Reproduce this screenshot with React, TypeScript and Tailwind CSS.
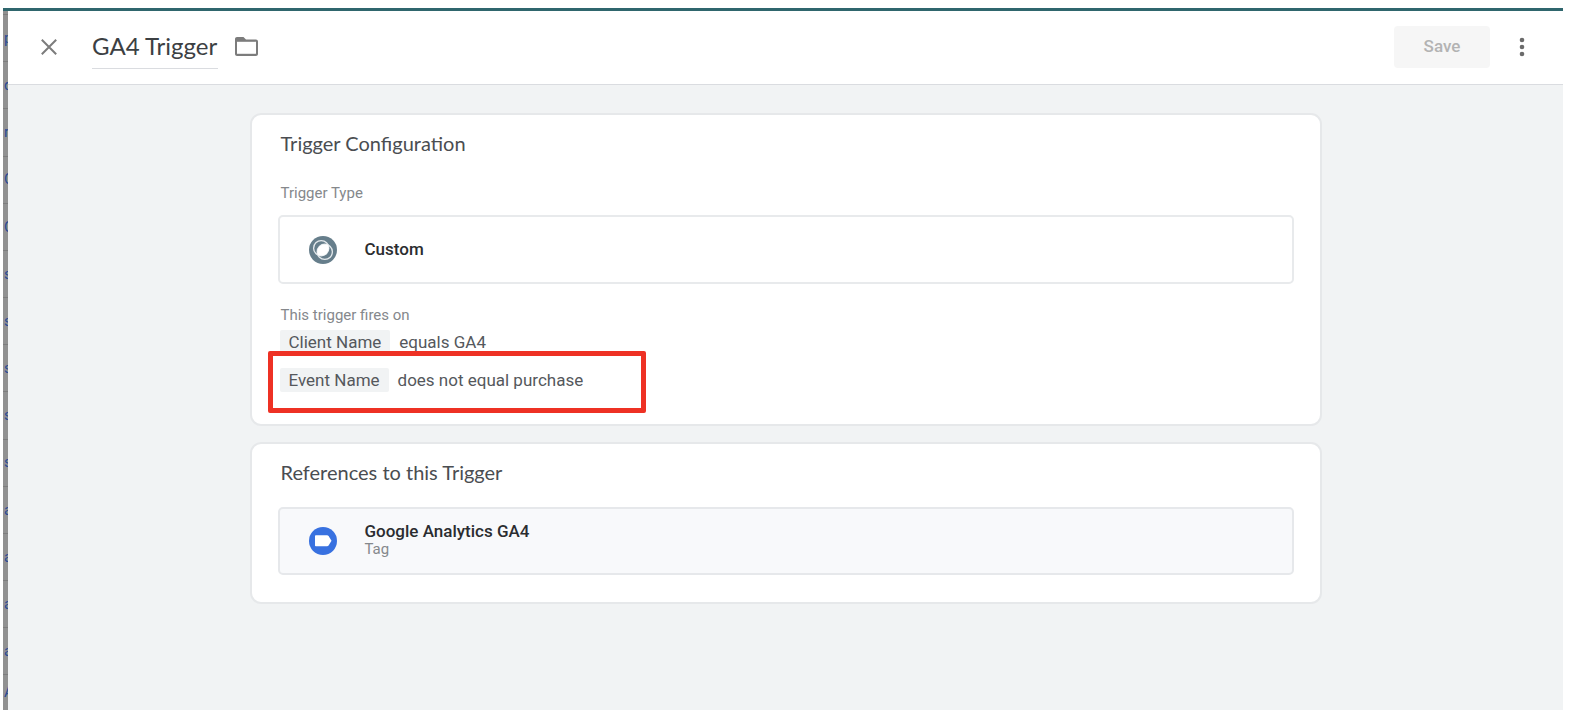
import React from "react";

// first letters of the list rows that stay visible behind the sheet
const BACKDROP_ROWS = ["p", "d", "r", "C", "C", "s", "s", "s", "s", "s", "a", "a", "a", "a", "A"];

const CONDITIONS = [
  { variable: "Client Name", test: "equals GA4", marked: false },
  { variable: "Event Name", test: "does not equal purchase", marked: true },
];

function CloseIcon() {
  return (
    <svg viewBox="0 0 16 16" className="size-4" fill="none" stroke="#7c7c7c" strokeWidth="2">
      <path d="M0.8 0.8 15.2 15.2M15.2 0.8 0.8 15.2" />
    </svg>
  );
}

function FolderIcon() {
  return (
    <svg viewBox="0 0 23 19" className="h-[19px] w-[23px]">
      <path d="M2 0h6.5l2.5 2.6H21c1.1 0 2 .9 2 2V17c0 1.1-.9 2-2 2H2c-1.1 0-2-.9-2-2V2C0 .9.9 0 2 0z" fill="#7c7c7c" />
      <path d="M2 4.8h19v12H2z" fill="#fff" />
    </svg>
  );
}

function MoreIcon() {
  return (
    <svg viewBox="0 0 6 20" className="h-5 w-[6px]" fill="#6b6b6b">
      <circle cx="3" cy="3" r="2.3" />
      <circle cx="3" cy="10" r="2.3" />
      <circle cx="3" cy="17" r="2.3" />
    </svg>
  );
}

function CustomIcon() {
  return (
    <svg viewBox="0 0 28 28" className="size-7 shrink-0">
      <clipPath id="custom-lens">
        <circle cx="12.2" cy="12.2" r="7.6" />
      </clipPath>
      <circle cx="14" cy="14" r="14" fill="#667e8b" />
      <circle cx="12.2" cy="12.2" r="7.6" fill="none" stroke="#e4e9ec" strokeWidth="1.3" />
      <circle cx="15.8" cy="15.8" r="7.6" fill="none" stroke="#e4e9ec" strokeWidth="1.3" />
      <circle cx="15.8" cy="15.8" r="7.6" fill="#fff" clipPath="url(#custom-lens)" />
    </svg>
  );
}

function TagIcon() {
  return (
    <svg viewBox="0 0 28 28" className="size-7 shrink-0">
      <circle cx="14" cy="14" r="14" fill="#3871e0" />
      <path d="M6.8 8.3H18c.7 0 1.2.3 1.6.8l2.9 4.7-2.9 4.7c-.4.5-.9.8-1.600.8H6.8c-.5 0-.8-.3-.8-.8V9.100c0-.5.3-.8.8-.8z" fill="#fff" />
    </svg>
  );
}

function Card({ title, children }: { title: string; children: React.ReactNode }) {
  return (
    <section className="rounded-[11px] border-2 border-[#e6e8ea] bg-white px-[26px] pt-4 pb-[27px]">
      <h2 className="px-[3px] font-['Lato'] text-xl leading-6 text-[#4a4d51]">{title}</h2>
      {children}
    </section>
  );
}

export default function App() {
  const [name, setName] = React.useState("GA4 Trigger");

  return (
    <div className="flex min-h-screen flex-col bg-white pt-2 pr-[9px] pb-[2px] pl-[3px] font-['Roboto',sans-serif]">
      <div className="h-[3px] bg-[#2f666d]" />
      <div className="flex flex-1">
        <aside aria-hidden="true" className="flex w-[5px] flex-col overflow-hidden bg-[#919191] pt-[3px]">
          {BACKDROP_ROWS.map((letter, i) => (
            <div
              key={i}
              className="flex h-0 flex-4 items-center border-t border-[#7d7d7d] pl-px text-[15px] text-[#2b4a94] last:flex-3"
            >
              {letter}
            </div>
          ))}
        </aside>

        <div className="flex flex-1 flex-col bg-[#f1f3f4]">
          <header className="flex h-[74px] items-center border-b border-[#dadce0] bg-white pr-[38px] pb-[2px] pl-[33px]">
            <button aria-label="Close">
              <CloseIcon />
            </button>
            <input
              aria-label="Trigger name"
              value={name}
              onChange={(e) => setName(e.target.value)}
              className="mr-[17px] ml-[35px] h-11 w-[126px] border-b border-[#dadce0] pb-[2px] font-['Lato'] text-2xl text-[#3c4043] outline-none"
            />
            <button aria-label="Choose folder">
              <FolderIcon />
            </button>
            <button
              disabled
              className="ml-auto h-[42px] w-24 rounded-[4px] bg-[#f6f6f6] text-[17px] font-medium text-[#b3b3b3]"
            >
              Save
            </button>
            <button aria-label="More actions" className="ml-[29px]">
              <MoreIcon />
            </button>
          </header>

          <main className="mx-auto flex w-full max-w-[1072px] flex-col gap-4 pt-7">
            <Card title="Trigger Configuration">
              <p className="mt-7 px-[3px] text-[15px] leading-5 text-[#85888c]">Trigger Type</p>
              <div className="mt-3 flex h-[69px] items-center gap-7 rounded-[5px] border-2 border-[#e8eaec] px-[29px]">
                <CustomIcon />
                <span className="pb-[2px] text-[17px] leading-5 font-medium text-[#2b2d30]">Custom</span>
              </div>
              <p className="mt-[21px] px-[3px] text-[15px] leading-5 text-[#85888c]">This trigger fires on</p>
              <ul className="mt-[5px] flex flex-col gap-[14px] pb-[5px] text-[17px] leading-6 text-[#55585c]">
                {CONDITIONS.map((c) => (
                  <li key={c.variable} className="relative flex gap-[9px] px-[2px]">
                    <span className="rounded-[2px] bg-[#f1f3f4] px-[9px]">{c.variable}</span>
                    <span>{c.test}</span>
                    {c.marked && (
                      <span className="absolute -top-[17px] -left-[10px] h-[62px] w-[378px] rounded-[2px] border-[5px] border-[#ee3124]" />
                    )}
                  </li>
                ))}
              </ul>
            </Card>

            <Card title="References to this Trigger">
              <div className="mt-[23px] flex h-[68px] items-center gap-7 rounded-[5px] border-2 border-[#e6e8eb] bg-[#f8f9fb] px-[29px]">
                <TagIcon />
                <div className="pb-1">
                  <div className="text-[17px] leading-5 font-medium text-[#2b2d30]">Google Analytics GA4</div>
                  <div className="text-[15px] leading-4 text-[#85888c]">Tag</div>
                </div>
              </div>
            </Card>
          </main>
        </div>
      </div>
    </div>
  );
}
